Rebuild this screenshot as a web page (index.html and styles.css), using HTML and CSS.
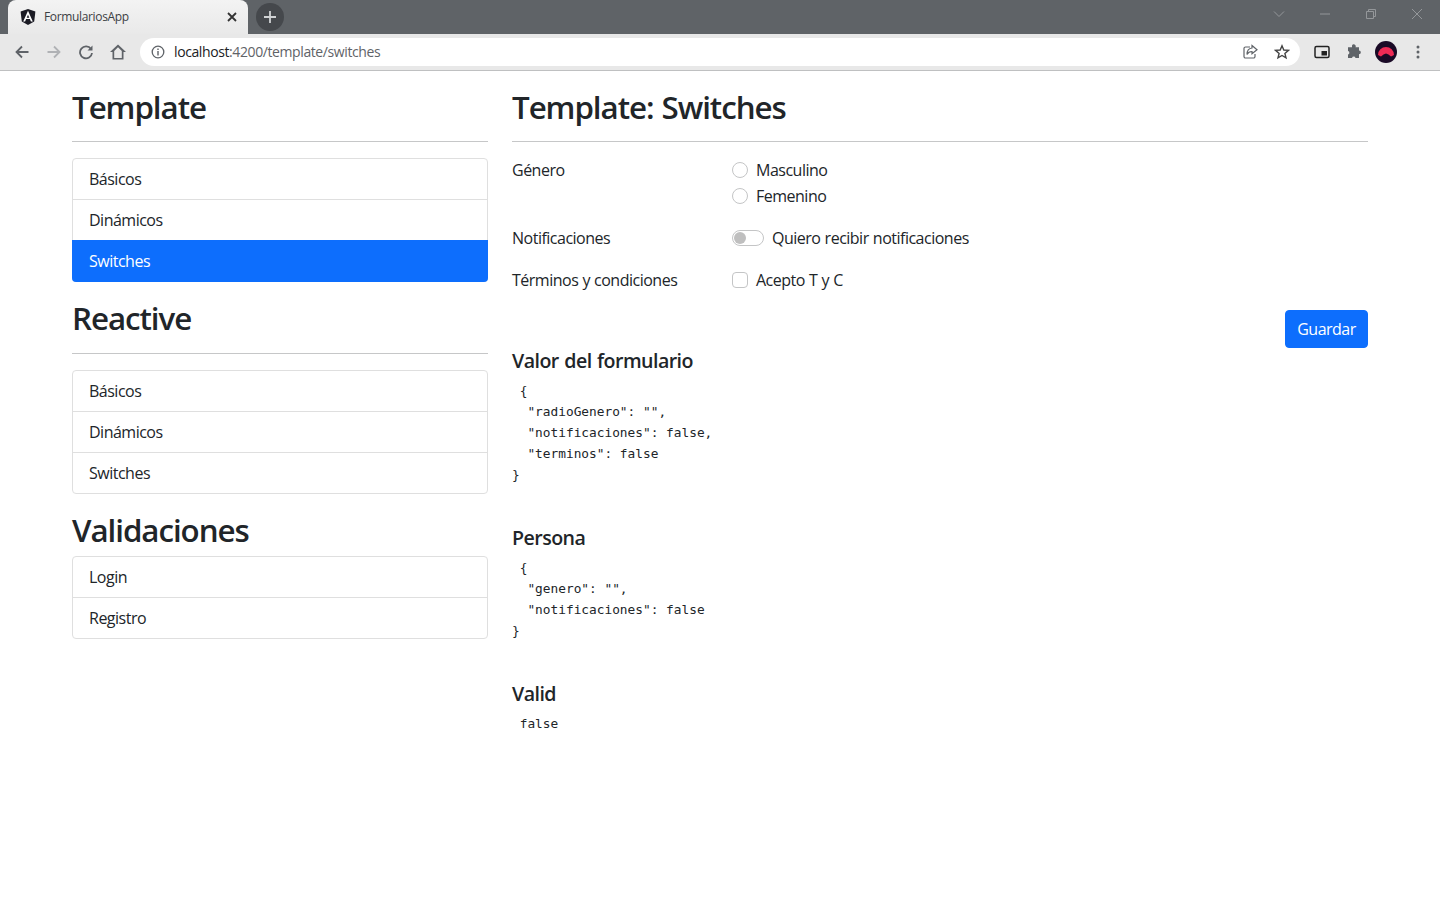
FILE: index.html
```html
<!DOCTYPE html>
<html lang="es">
<head>
<meta charset="utf-8">
<title>FormulariosApp</title>
<link rel="stylesheet" href="styles.css">
</head>
<body>
<header class="browser">
  <div class="tabstrip">
    <div class="tab">
      <svg class="favicon" viewBox="0 0 16 16"><path d="M8 0 15.4 2.6 14.2 12.4 8 16 1.8 12.4.6 2.6Z" fill="#1b1b24"/><path d="M8 1.800 3.200 12.600H5.100L6.100 10.100H9.900L10.900 12.600H12.800ZM8 5.700 9.300 8.700H6.700Z" fill="#fff" fill-rule="evenodd"/></svg>
      <span class="tab-title">FormulariosApp</span>
      <svg class="tab-close" viewBox="0 0 10 10"><path d="M1 1 9 9M9 1 1 9" stroke="#333" stroke-width="1.8" fill="none"/></svg>
    </div>
    <div class="newtab"><svg viewBox="0 0 12 12"><path d="M6 0V12M0 6H12" stroke="#d0d2d4" stroke-width="1.8" fill="none"/></svg></div>
    <div class="spacer"></div>
    <div class="winctl">
      <svg viewBox="0 0 12 12"><path d="M1 3.5 6 8.5 11 3.5" stroke="#94979a" fill="none"/></svg>
      <svg viewBox="0 0 12 12"><path d="M1 6H11" stroke="#94979a" fill="none"/></svg>
      <svg viewBox="0 0 12 12"><path d="M1.5 3.5H8.5V10.5H1.5ZM3.5 3.5V1.5H10.5V8.5H8.5" stroke="#94979a" fill="none"/></svg>
      <svg viewBox="0 0 12 12"><path d="M1 1 11 11M11 1 1 11" stroke="#94979a" fill="none"/></svg>
    </div>
  </div>
  <div class="toolbar">
    <svg class="tool" viewBox="0 0 16 16"><path d="M14.5 8H2.5M8 2.5 2.5 8 8 13.5" stroke="#5f6368" stroke-width="1.8" fill="none"/></svg>
    <svg class="tool" viewBox="0 0 16 16"><path d="M1.5 8H13.5M8 2.5 13.5 8 8 13.5" stroke="#b0b2b5" stroke-width="1.8" fill="none"/></svg>
    <svg class="tool" viewBox="0 0 16 16"><path d="M13 5A6 6 0 1 0 14 9" stroke="#5f6368" stroke-width="1.8" fill="none"/><path d="M14.5 1.5V6.5H9.5Z" fill="#5f6368"/></svg>
    <svg class="tool" viewBox="0 0 16 16"><path d="M8 .5 0 8H2.500V15.500H13.500V8H16ZM4.200 6.900 8 3.200 11.800 6.900V13.900H4.200Z" fill="#5f6368" fill-rule="evenodd"/></svg>
    <div class="omnibox">
      <svg class="info" viewBox="0 0 14 14"><circle cx="7" cy="7" r="5.8" stroke="#5f6368" stroke-width="1.3" fill="none"/><path d="M7 6V10.5M7 3.5V5" stroke="#5f6368" stroke-width="1.4"/></svg>
      <span class="url">localhost<span class="url-dim">:4200/template/switches</span></span>
      <span class="spacer"></span>
      <svg class="omni-icon" viewBox="0 0 16 16"><path d="M8 3H3.500A1.500 1.500 0 0 0 2 4.500V12.500A1.500 1.500 0 0 0 3.500 14H11.500A1.500 1.500 0 0 0 13 12.500V10" stroke="#5f6368" stroke-width="1.200" fill="none"/><path d="M10 1.500 15 5.800 10 9.800V7.500C7.500 7.500 6 8.500 5 10.500 5 7 7 4.300 10 4Z" stroke="#5f6368" stroke-width="1.200" fill="none"/></svg>
      <svg class="omni-icon" viewBox="0 0 16 16"><path d="M8 1.800 9.800 6 14.400 6.400 10.900 9.400 12 13.900 8 11.500 4 13.900 5.100 9.400 1.600 6.400 6.200 6Z" stroke="#444" stroke-width="1.400" fill="none"/></svg>
    </div>
    <svg class="tool pip" viewBox="0 0 16 16"><rect x="1" y="2.500" width="14" height="11" rx="1.500" stroke="#222" stroke-width="1.500" fill="none"/><rect x="7.500" y="7" width="5.500" height="4.500" fill="#222"/></svg>
    <svg class="tool" viewBox="0 0 16 16"><path d="M6 1.500A1.700 1.700 0 0 1 9.500 3.200H13V6.500A1.800 1.800 0 0 1 13 10.200V14H9.500A1.800 1.800 0 0 0 6 14H2V10.500A1.800 1.800 0 0 0 2 7V3.200H6Z" fill="#5f6368"/></svg>
    <svg class="avatar" viewBox="0 0 22 22"><circle cx="11" cy="11" r="11" fill="#1a0a26"/><path d="M3 14A8 8 0 0 1 19 14L16 15.500 13.500 13.500 11 12.500 8.500 13.500 6 15.500Z" fill="#ee2a55"/></svg>
    <svg class="tool dots" viewBox="0 0 16 16"><circle cx="8" cy="3" r="1.500" fill="#5f6368"/><circle cx="8" cy="8" r="1.500" fill="#5f6368"/><circle cx="8" cy="13" r="1.500" fill="#5f6368"/></svg>
  </div>
</header>

<main class="container">
  <aside class="col-side">
    <h2>Template</h2>
    <hr>
    <ul class="list">
      <li>Básicos</li>
      <li>Dinámicos</li>
      <li class="active">Switches</li>
    </ul>
    <h2>Reactive</h2>
    <hr>
    <ul class="list">
      <li>Básicos</li>
      <li>Dinámicos</li>
      <li>Switches</li>
    </ul>
    <h2 class="tight">Validaciones</h2>
    <ul class="list">
      <li>Login</li>
      <li>Registro</li>
    </ul>
  </aside>
  <section class="col-main">
    <h2>Template: Switches</h2>
    <hr>
    <form class="form">
      <div class="form-row">
        <div class="form-label">Género</div>
        <div class="form-field">
          <label class="check"><span class="radio"></span>Masculino</label>
          <label class="check"><span class="radio"></span>Femenino</label>
        </div>
      </div>
      <div class="form-row">
        <div class="form-label">Notificaciones</div>
        <div class="form-field">
          <label class="check"><span class="switch"><span class="knob"></span></span>Quiero recibir notificaciones</label>
        </div>
      </div>
      <div class="form-row">
        <div class="form-label">Términos y condiciones</div>
        <div class="form-field">
          <label class="check"><span class="box"></span>Acepto T y C</label>
        </div>
      </div>
      <div class="form-actions"><button type="button" class="btn">Guardar</button></div>
    </form>
    <h5>Valor del formulario</h5>
    <pre> {
  "radioGenero": "",
  "notificaciones": false,
  "terminos": false
}</pre>
    <h5>Persona</h5>
    <pre> {
  "genero": "",
  "notificaciones": false
}</pre>
    <h5>Valid</h5>
    <pre> false</pre>
  </section>
</main>
</body>
</html>
```
FILE: styles.css
```css
* { box-sizing: border-box; }
html, body { margin: 0; padding: 0; }
body {
  font-family: "Open Sans", "Noto Sans", sans-serif;
  font-size: 16px;
  line-height: 24px;
  color: #212529;
  background: #fff;
  letter-spacing: -0.5px;
  word-spacing: 0.5px;
}
.browser { height: 71px; letter-spacing: 0; word-spacing: 0; }
.tabstrip {
  height: 34px;
  background: #5f6367;
  display: flex;
  align-items: flex-end;
  padding-left: 8px;
}
.tab {
  width: 240px;
  height: 34px;
  background: linear-gradient(#f3f3f3, #e9e9e9);
  border-radius: 8px 8px 0 0;
  display: flex;
  align-items: center;
  padding: 0 12px;
}
.favicon { width: 16px; height: 16px; margin-right: 8px; }
.tab-title { font-size: 12px; color: #3c4043; flex: 1; letter-spacing: -0.35px; }
.tab-close { width: 10px; height: 10px; margin-right: -1px; }
.newtab {
  width: 28px;
  height: 28px;
  border-radius: 50%;
  background: #45484c;
  margin: 0 0 3px 8px;
  display: flex;
  align-items: center;
  justify-content: center;
}
.newtab svg { width: 12px; height: 12px; }
.spacer { flex: 1; }
.winctl {
  display: flex;
  align-self: flex-start;
  align-items: center;
  gap: 34px;
  height: 28px;
  padding-right: 17px;
}
.winctl svg { width: 12px; height: 12px; }
.toolbar {
  height: 37px;
  background: #e8e8e8;
  border-bottom: 1px solid #bfc0c1;
  display: flex;
  align-items: center;
  padding: 0 14px;
  gap: 16px;
}
.tool { width: 16px; height: 16px; flex: none; }
.omnibox {
  flex: 1;
  height: 28px;
  margin: 0 -2px;
  background: #fff;
  border-radius: 14px;
  display: flex;
  align-items: center;
  padding: 0 10px 0 11px;
  font-size: 14px;
}
.info { width: 14px; height: 14px; margin-right: 9px; }
.url { color: #202124; letter-spacing: -0.4px; word-spacing: 0; }
.url-dim { color: #5f6368; }
.omni-icon { width: 16px; height: 16px; margin-left: 16px; }
.avatar { width: 22px; height: 22px; flex: none; margin: 0 -3px; }
.container {
  width: 1320px;
  margin: 0 auto;
  padding: 16px 12px 0;
  display: flex;
  gap: 24px;
}
.col-side { width: 416px; flex: none; }
.col-main { flex: 1; }
h2 {
  font-size: 31.3px;
  line-height: 36.4px;
  padding-top: 2px;
  font-weight: 600;
  margin: 0;
  letter-spacing: -1.05px;
  word-spacing: 1px;
}
h2.tight { margin-bottom: 8px; }
hr {
  border: 0;
  border-top: 1px solid #c6c7c8;
  margin: 16px 0;
  height: 0;
}
.list {
  list-style: none;
  margin: 0 0 16px;
  padding: 0;
  border: 1px solid #dfdfdf;
  border-radius: 4px;
}
.list li {
  height: 41px;
  padding: 8px 16px;
  border-top: 1px solid #dfdfdf;
  margin: 0;
}
.list li:first-child { border-top: 0; height: 40px; }
.list li.active {
  background: #0d6efd;
  color: #fff;
  margin: 0 -1px -1px;
  padding: 9px 17px 0;
  height: 42px;
  border: 0;
  border-radius: 0 0 4px 4px;
  position: relative;
}
.form-row { display: flex; margin-bottom: 16px; }
.form-label { width: 220px; flex: none; }
.form-field { flex: 1; }
.check { display: flex; align-items: center; height: 24px; margin-bottom: 2px; }
.radio, .box, .switch { border: 1px solid #c4c5c6; background: #fff; flex: none; }
.radio { width: 16px; height: 16px; border-radius: 50%; margin-right: 8px; }
.box { width: 16px; height: 16px; border-radius: 4px; margin-right: 8px; }
.switch {
  width: 32px;
  height: 16px;
  border-radius: 8px;
  margin-right: 8px;
  padding: 1px;
}
.knob { display: block; width: 12px; height: 12px; border-radius: 50%; background: #bfbfbf; }
.form-actions { display: flex; justify-content: flex-end; }
.btn {
  font: inherit;
  letter-spacing: inherit;
  width: 83px;
  height: 38px;
  background: #0d6efd;
  color: #fff;
  border: 1px solid #0d6efd;
  border-radius: 4px;
  padding: 0;
}
h5 {
  font-size: 19.6px;
  line-height: 24px;
  font-weight: 600;
  margin: 0 0 7px;
  letter-spacing: -0.55px;
  word-spacing: 1px;
}
.form + h5 { margin-top: 1px; }
pre {
  font-family: "DejaVu Sans Mono", monospace;
  font-size: 12.8px;
  line-height: 21px;
  margin: 0 0 41px;
  letter-spacing: 0;
  word-spacing: 0;
}
```
